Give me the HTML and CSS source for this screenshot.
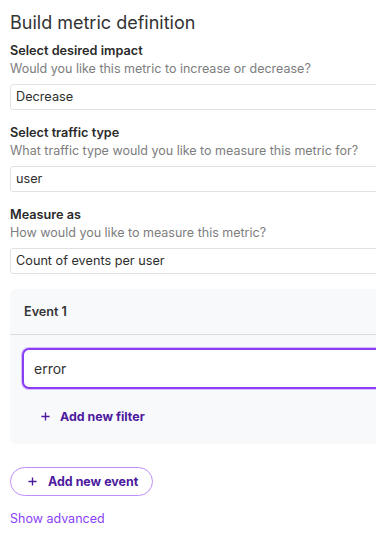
FILE: index.html
```html
<!DOCTYPE html>
<html lang="en">
<head>
<meta charset="utf-8">
<title>Build metric definition</title>
<link rel="stylesheet" href="styles.css">
</head>
<body>
<div class="form">
  <h1 class="title">Build metric definition</h1>

  <div class="field first">
    <div class="label">Select desired impact</div>
    <div class="hint">Would you like this metric to increase or decrease?</div>
    <div class="select">Decrease</div>
  </div>

  <div class="field">
    <div class="label">Select traffic type</div>
    <div class="hint">What traffic type would you like to measure this metric for?</div>
    <div class="select">user</div>
  </div>

  <div class="field">
    <div class="label">Measure as</div>
    <div class="hint">How would you like to measure this metric?</div>
    <div class="select">Count of events per user</div>
  </div>

  <div class="card">
    <div class="card-head">Event 1</div>
    <div class="card-body">
      <div class="event-input">error</div>
      <div class="add-filter">
        <svg class="plus" width="9" height="9" viewBox="0 0 10 10"><path d="M5 0.5V9.5M0.5 5H9.5" stroke="currentColor" stroke-width="1.5" fill="none"/></svg>
        <span>Add new filter</span>
      </div>
    </div>
  </div>

  <div class="btn-row">
    <div class="add-event">
      <svg class="plus" width="9" height="9" viewBox="0 0 10 10"><path d="M5 0.5V9.5M0.5 5H9.5" stroke="currentColor" stroke-width="1.5" fill="none"/></svg>
      <span>Add new event</span>
    </div>
  </div>

  <div class="advanced">Show advanced</div>
</div>
</body>
</html>
```

FILE: styles.css
```css
html, body {
  margin: 0;
  padding: 0;
  overflow: hidden;
  background: #ffffff;
}
body {
  font-family: Inter, "Noto Sans", "Liberation Sans", sans-serif;
  color: #2b2b2b;
}
.form {
  width: 420px;
  padding: 0 10px;
}
.title {
  margin: 11px 0 0;
  font-size: 18px;
  line-height: 24px;
  font-weight: 400;
  color: #333333;
}
.field {
  margin-top: 13px;
}
.field.first {
  margin-top: 6px;
}
.label {
  font-size: 12.7px;
  line-height: 19px;
  font-weight: 600;
  color: #2a2a2a;
}
.hint {
  font-size: 12.5px;
  line-height: 18px;
  color: #7d7d7d;
}
.select {
  margin-top: 6px;
  height: 24px;
  border: 1px solid #e2e2e2;
  border-radius: 3px;
  padding-left: 5px;
  font-size: 12.7px;
  line-height: 24px;
  color: #2e2e2e;
}
.card {
  margin-top: 15px;
  background: #f8f9fb;
  border-radius: 6px;
}
.card-head {
  height: 45px;
  padding-left: 14px;
  font-size: 12.6px;
  font-weight: 600;
  line-height: 45px;
  color: #333333;
  border-bottom: 1px solid #dcdcdc;
}
.card-body {
  padding: 13px 12px 5px;
}
.event-input {
  height: 37px;
  border: 2px solid #8b3ff5;
  border-radius: 7px;
  box-shadow: 0 0 0 1px #d7bdfb;
  background: #ffffff;
  padding-left: 10px;
  font-size: 14px;
  line-height: 37px;
  color: #333333;
}
.add-filter {
  display: flex;
  align-items: center;
  gap: 10px;
  height: 46px;
  margin-top: 4px;
  padding-left: 19px;
  font-size: 12.4px;
  font-weight: 700;
  color: #4d1a9e;
}
.btn-row {
  margin-top: 23px;
  display: flex;
}
.add-event {
  display: flex;
  align-items: center;
  gap: 11px;
  height: 27px;
  padding: 0 14px 0 17px;
  border: 1px solid #bf8ff5;
  border-radius: 15px;
  font-size: 12.45px;
  font-weight: 700;
  color: #4d1a9e;
}
.plus {
  flex: none;
}
.advanced {
  margin-top: 14px;
  font-size: 12.5px;
  line-height: 18px;
  color: #8a3ffc;
}
```
